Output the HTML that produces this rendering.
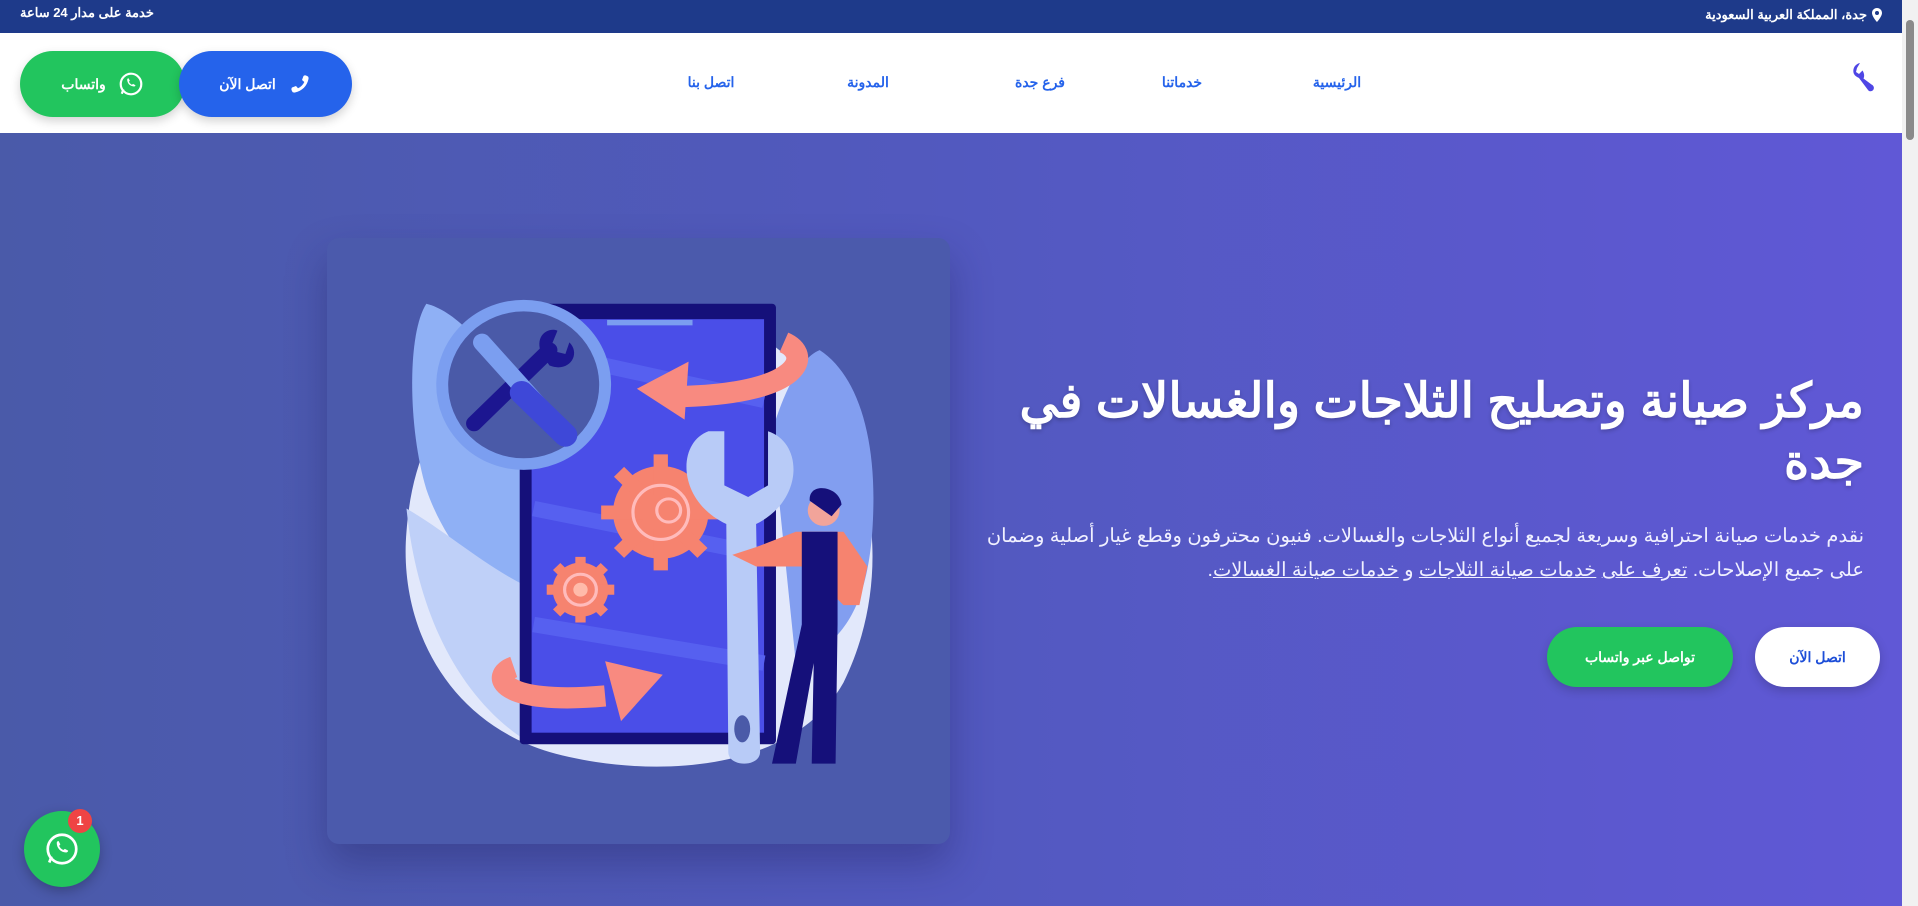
<!DOCTYPE html>
<html lang="ar" dir="rtl"><head><meta charset="utf-8">
<style>
*{margin:0;padding:0;box-sizing:border-box}
html,body{width:1918px;height:906px;overflow:hidden;font-family:"Liberation Sans","Noto Sans CJK SC",sans-serif;background:#fff}
.top{position:absolute;left:0;top:0;width:1902px;height:33px;background:#1e3a8a;color:#fff;font-size:13px;font-weight:bold}
.top .r{position:absolute;right:20px;top:7px;display:flex;align-items:center;gap:5px}
.top .l{position:absolute;left:20px;top:5px}
.nav{position:absolute;left:0;top:33px;width:1902px;height:100px;background:#fff}
.nav a{position:absolute;top:41px;color:#2563eb;font-weight:bold;font-size:14px;text-decoration:none;transform:translateX(-50%);white-space:nowrap}
.btn{position:absolute;border-radius:34px;color:#fff;font-weight:bold;font-size:14px;display:flex;align-items:center;justify-content:center;gap:12px;box-shadow:0 4px 10px rgba(0,0,0,.18)}
.hero{position:absolute;left:0;top:133px;width:1902px;height:773px;background:linear-gradient(90deg,#4a5aa9 0%,#5259bf 50%,#6058d6 100%)}
.card{position:absolute;left:327px;top:105px;width:623px;height:606px;border-radius:12px;background:#4b5aac;box-shadow:0 20px 40px rgba(30,30,90,.35)}
h1{position:absolute;right:38px;top:238px;width:900px;color:#fff;font-size:48px;line-height:61px;font-weight:bold;text-align:right;text-shadow:0 2px 4px rgba(0,0,0,.2)}
p.d{position:absolute;right:38px;top:386px;width:900px;color:#f0f0ff;font-size:19.5px;line-height:34px;text-align:right}
p.d u{text-decoration:underline}
.sb{position:absolute;right:0;top:0;width:16px;height:906px;background:#f1f1f1}
.sb div{position:absolute;left:4px;top:20px;width:8px;height:120px;background:#8a8a8a;border-radius:4px}
</style></head><body>
<div class="top">
 <div class="r"><svg width="10" height="14" viewBox="0 0 10 14"><path d="M5 0C2.2 0 0 2.2 0 5c0 3.5 5 9 5 9s5-5.5 5-9C10 2.2 7.8 0 5 0zm0 7a2 2 0 110-4 2 2 0 010 4z" fill="#fff"/></svg><span>جدة، المملكة العربية السعودية</span></div>
 <div class="l">خدمة على مدار 24 ساعة</div>
</div>
<div class="nav">
 <svg style="position:absolute;left:1850px;top:28px" width="28" height="32" viewBox="0 0 28 32"><path d="M10 2C5 3 2 8 4 13c1 2 3 3 5 4l9 12c1.5 2 4.5 1.5 5.5-.5 1-2 0-4-2-5l-8-6c1-2 1-5-1-8L9 13 6 11 7 7z" fill="#4f46e5"/></svg>
 <a style="left:1337px">الرئيسية</a>
 <a style="left:1182px">خدماتنا</a>
 <a style="left:1040px">فرع جدة</a>
 <a style="left:868px">المدونة</a>
 <a style="left:711px">اتصل بنا</a>
 <div class="btn" style="left:20px;top:18px;width:165px;height:66px;background:#22c55e"><svg width="26" height="26" viewBox="0 0 24 24"><circle cx="12" cy="12" r="9.5" fill="none" stroke="#fff" stroke-width="2"/><path d="M3.5 21l1.5-4" stroke="#fff" stroke-width="2"/><path d="M8.5 8c0-.8.6-1.3 1.2-1.3l1.2 2.2-.8 1c.6 1.3 1.5 2.2 2.8 2.8l1-.8 2.2 1.2c0 .6-.5 1.2-1.3 1.2-3.5 0-6.3-2.8-6.3-6.3z" fill="#fff"/></svg><span>واتساب</span></div>
 <div class="btn" style="left:179px;top:18px;width:173px;height:66px;background:#2563eb"><svg width="24" height="24" viewBox="0 0 24 24"><path d="M20 15.5l-4-1.5-2 2.3c-3-1.4-5-3.5-6.3-6.3L10 8 8.5 4C8 3.5 7 3.3 6 3.5L4 4.5C3.5 5 3.3 6 3.5 7 5 14 10 19 17 20.5c1 .2 2-.1 2.5-.5l1-2c.2-1 0-2-.5-2.5z" fill="#fff" transform="scale(-1 1) translate(-24 0)"/></svg><span>اتصل الآن</span></div>
</div>
<div class="hero">
 <div class="card">
 <svg width="623" height="606" viewBox="0 0 1568 1568" preserveAspectRatio="none">
  <path d="M420 300C600 120 1000 130 1180 330 1400 560 1420 900 1300 1150 1170 1390 800 1400 560 1330 300 1250 180 1000 200 760 215 560 280 440 420 300z" fill="#e2e8fb"/>
  <path d="M250 170C330 190 420 300 480 420L500 1000C400 900 300 800 250 650 205 500 200 250 250 170z" fill="#8fb0f5"/>
  <path d="M200 700C300 760 400 850 500 900L500 1300C350 1200 230 1000 200 700z" fill="#bfd0f8"/>
  <path d="M1240 290C1330 350 1380 500 1375 700 1370 950 1300 1050 1180 1100L1120 500C1150 400 1190 310 1240 290z" fill="#829ef0"/>
  <rect x="485" y="170" width="645" height="1140" rx="10" fill="#15107a"/>
  <rect x="515" y="210" width="585" height="1070" fill="#4a4ee8"/>
  <rect x="705" y="212" width="215" height="14" fill="#7b9ef0"/>
  <path d="M520 700L1100 820M520 1000L1100 1100M700 330L1100 420" stroke="#5660f0" stroke-width="40"/>
  <circle cx="495" cy="380" r="205" fill="#4a5aa8" stroke="#7b9ef0" stroke-width="30"/>
  <path d="M370 480L560 290" stroke="#1c1690" stroke-width="40" stroke-linecap="round"/>
  <path d="M540 300C520 250 560 230 580 240L560 290 600 300 610 270C640 300 610 350 560 330z" fill="#1c1690"/>
  <path d="M390 270L600 510" stroke="#7b9ef0" stroke-width="45" stroke-linecap="round"/>
  <path d="M490 400L600 510" stroke="#3e48d8" stroke-width="60" stroke-linecap="round"/>
  <g fill="#f6836f"><circle cx="840" cy="710" r="120"/><circle cx="638" cy="910" r="70"/></g>
  <g stroke="#f6836f" stroke-width="36"><path d="M840 560V860M690 710H990M735 605L945 815M945 605L735 815"/><path d="M638 825V995M553 910H723M578 850L698 970M698 850L578 970" stroke-width="26"/></g>
  <circle cx="840" cy="710" r="70" fill="none" stroke="#fbb" stroke-width="8"/><circle cx="860" cy="705" r="30" fill="none" stroke="#fbb" stroke-width="8"/>
  <circle cx="638" cy="910" r="40" fill="none" stroke="#fbb" stroke-width="8"/><circle cx="638" cy="910" r="18" fill="#fba"/>
  <path d="M1150 270C1220 300 1200 400 900 410" fill="none" stroke="#f88a80" stroke-width="55"/>
  <path d="M780 390L910 320 900 470z" fill="#f88a80"/>
  <path d="M470 1110C410 1130 430 1210 700 1185" fill="none" stroke="#f88a80" stroke-width="55"/>
  <path d="M700 1095L845 1130 740 1250z" fill="#f88a80"/>
  <path d="M960 500C880 530 880 680 1005 740L1010 1330C1010 1370 1090 1370 1090 1330L1080 740C1200 680 1200 530 1110 500L1110 640 1060 670 1000 640 1000 500z" fill="#b8cbf7"/>
  <ellipse cx="1045" cy="1270" rx="20" ry="35" fill="#4a5aa8"/>
  <circle cx="1250" cy="705" r="40" fill="#f2a49a"/><path d="M1215 680C1210 630 1290 640 1295 690L1270 720z" fill="#15107a"/>
  <path d="M1180 760L1300 760 1360 850 1340 950 1300 950 1200 850 1080 850 1020 820 1080 800z" fill="#f6836f"/>
  <path d="M1195 760H1285V1000L1280 1360H1220L1225 1100 1180 1360H1120L1195 1000z" fill="#15107a"/>
 </svg>
 </div>
 <h1>مركز صيانة وتصليح الثلاجات والغسالات في جدة</h1>
 <p class="d">نقدم خدمات صيانة احترافية وسريعة لجميع أنواع الثلاجات والغسالات. فنيون محترفون وقطع غيار أصلية وضمان على جميع الإصلاحات. <u>تعرف على</u> <u>خدمات صيانة الثلاجات</u> و <u>خدمات صيانة الغسالات</u>.</p>
 <div class="btn" style="left:1755px;top:494px;width:125px;height:60px;background:#fff;color:#1d4ed8">اتصل الآن</div>
 <div class="btn" style="left:1547px;top:494px;width:186px;height:60px;background:#22c55e">تواصل عبر واتساب</div>
 <div style="position:absolute;left:24px;top:678px;width:76px;height:76px;border-radius:50%;background:#22c55e;box-shadow:0 4px 12px rgba(0,0,0,.25)">
  <svg style="position:absolute;left:20px;top:20px" width="36" height="36" viewBox="0 0 24 24"><circle cx="12" cy="12" r="9.5" fill="none" stroke="#fff" stroke-width="1.8"/><path d="M3.5 21l1.5-4" stroke="#fff" stroke-width="1.8"/><path d="M8.5 8c0-.8.6-1.3 1.2-1.3l1.2 2.2-.8 1c.6 1.3 1.5 2.2 2.8 2.8l1-.8 2.2 1.2c0 .6-.5 1.2-1.3 1.2-3.5 0-6.3-2.8-6.3-6.3z" fill="#fff"/></svg>
  <div style="position:absolute;left:44px;top:-2px;width:24px;height:24px;border-radius:50%;background:#ef4444;color:#fff;font-size:13px;font-weight:bold;text-align:center;line-height:24px">1</div>
 </div>
</div>
<div class="sb"><div></div></div>
</body></html>
